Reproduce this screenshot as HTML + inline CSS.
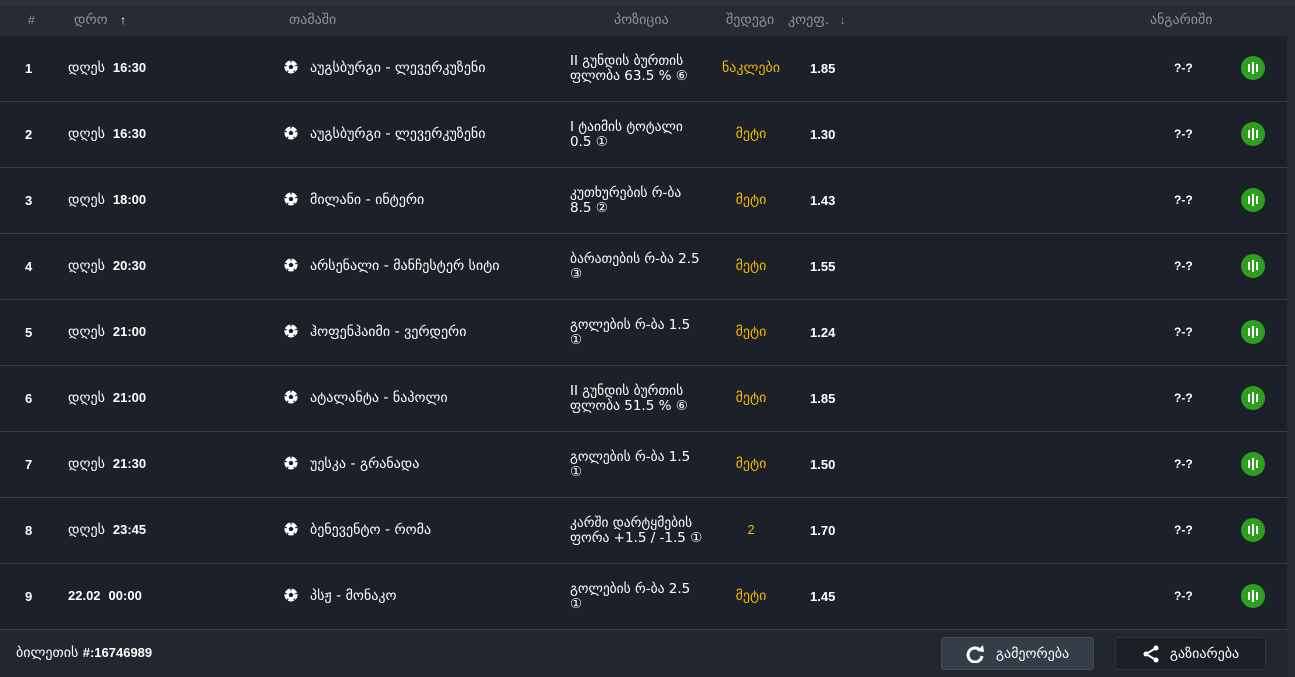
<!DOCTYPE html>
<html><head><meta charset="utf-8"><style>
*{margin:0;padding:0;box-sizing:border-box}
body{width:1295px;height:677px;background:#1c2028;font-family:"DejaVu Sans","Liberation Sans",sans-serif;color:#fff;overflow:hidden;position:relative;font-size:13px}
.top{position:absolute;left:0;top:0;width:1295px;height:6px;background:#2b3039}
.hdr{position:absolute;left:0;top:6px;width:1287px;height:30px;background:#262b34;color:#8d939c;font-size:14px}
.hdr span{position:absolute;top:6px}
.hdr b{font-family:"Liberation Sans",sans-serif;font-size:12px}
.sb{position:absolute;right:0;top:6px;width:8px;height:671px;background:#262b32}
.row{position:absolute;left:0;width:1287px;height:66px;border-bottom:1px solid #3a3f47}
.row>*{position:absolute}
.L{font-family:"Liberation Sans",sans-serif;font-weight:bold;font-size:13px}
.n{left:25px;top:25px}
.t{left:68px;top:24px;font-size:14px}
.t b{font-family:"Liberation Sans",sans-serif;font-size:13px;margin-left:8px}
.g{left:284px;top:24px;font-size:14px}
.g svg{vertical-align:-2px;margin-right:12px}
.p{left:570px;top:18px;font-size:13.5px;line-height:15px;width:170px}
.o{left:710px;width:82px;text-align:center;top:24px;color:#f5b800;font-size:14px}
.k{left:810px;top:25px}
.s{left:1174px;top:25px;font-size:12px}
.c{left:1241px;top:20px;width:24px;height:24px;border-radius:50%;background:#2e9e1f}
.c i{position:absolute;background:#fff;width:2px}
.foot{position:absolute;left:0;top:630px;width:1287px;height:47px;background:#22262e}
.btn{position:absolute;top:7px;height:33px;border-radius:3px;font-size:14px;display:flex;align-items:center;justify-content:center;gap:10px}
</style></head><body>
<div class="top"></div>
<div class="hdr">
<span style="left:28px"><b style="font-weight:normal">#</b></span>
<span style="left:74px">დრო <b style="color:#fff;margin-left:8px">↑</b></span>
<span style="left:289px">თამაში</span>
<span style="left:614px">პოზიცია</span>
<span style="left:726px">შედეგი</span>
<span style="left:788px">კოეფ. <b style="margin-left:6px">↓</b></span>
<span style="left:1150px">ანგარიში</span>
</div>
<div class="sb"></div>

<div class="row" style="top:36px"><div class="n L">1</div><div class="t">დღეს<b>16:30</b></div><div class="g"><svg width="14" height="14" viewBox="0 0 14 14"><circle cx="7" cy="7" r="6.5" fill="#fff"/><polygon points="7,4.5 9.4,6.2 8.5,9 5.5,9 4.6,6.2" fill="#1c2028"/><path d="M7 0.5v2M0.8 5.2l2 .6M13.2 5.2l-2 .6M3 12.5l1.2-1.8M11 12.5l-1.2-1.8" stroke="#1c2028" stroke-width="1.3"/></svg>აუგსბურგი - ლევერკუზენი</div><div class="p">II გუნდის ბურთის<br>ფლობა 63.5 % ⑥</div><div class="o">ნაკლები</div><div class="k L">1.85</div><div class="s L">?-?</div><div class="c"><i style="left:7px;top:8px;height:8px"></i><i style="left:11px;top:6px;height:12px"></i><i style="left:15px;top:8px;height:8px"></i></div></div>

<div class="row" style="top:102px"><div class="n L">2</div><div class="t">დღეს<b>16:30</b></div><div class="g"><svg width="14" height="14" viewBox="0 0 14 14"><circle cx="7" cy="7" r="6.5" fill="#fff"/><polygon points="7,4.5 9.4,6.2 8.5,9 5.5,9 4.6,6.2" fill="#1c2028"/><path d="M7 0.5v2M0.8 5.2l2 .6M13.2 5.2l-2 .6M3 12.5l1.2-1.8M11 12.5l-1.2-1.8" stroke="#1c2028" stroke-width="1.3"/></svg>აუგსბურგი - ლევერკუზენი</div><div class="p">I ტაიმის ტოტალი<br>0.5 ①</div><div class="o">მეტი</div><div class="k L">1.30</div><div class="s L">?-?</div><div class="c"><i style="left:7px;top:8px;height:8px"></i><i style="left:11px;top:6px;height:12px"></i><i style="left:15px;top:8px;height:8px"></i></div></div>

<div class="row" style="top:168px"><div class="n L">3</div><div class="t">დღეს<b>18:00</b></div><div class="g"><svg width="14" height="14" viewBox="0 0 14 14"><circle cx="7" cy="7" r="6.5" fill="#fff"/><polygon points="7,4.5 9.4,6.2 8.5,9 5.5,9 4.6,6.2" fill="#1c2028"/><path d="M7 0.5v2M0.8 5.2l2 .6M13.2 5.2l-2 .6M3 12.5l1.2-1.8M11 12.5l-1.2-1.8" stroke="#1c2028" stroke-width="1.3"/></svg>მილანი - ინტერი</div><div class="p">კუთხურების რ-ბა<br>8.5 ②</div><div class="o">მეტი</div><div class="k L">1.43</div><div class="s L">?-?</div><div class="c"><i style="left:7px;top:8px;height:8px"></i><i style="left:11px;top:6px;height:12px"></i><i style="left:15px;top:8px;height:8px"></i></div></div>

<div class="row" style="top:234px"><div class="n L">4</div><div class="t">დღეს<b>20:30</b></div><div class="g"><svg width="14" height="14" viewBox="0 0 14 14"><circle cx="7" cy="7" r="6.5" fill="#fff"/><polygon points="7,4.5 9.4,6.2 8.5,9 5.5,9 4.6,6.2" fill="#1c2028"/><path d="M7 0.5v2M0.8 5.2l2 .6M13.2 5.2l-2 .6M3 12.5l1.2-1.8M11 12.5l-1.2-1.8" stroke="#1c2028" stroke-width="1.3"/></svg>არსენალი - მანჩესტერ სიტი</div><div class="p">ბარათების რ-ბა 2.5<br>③</div><div class="o">მეტი</div><div class="k L">1.55</div><div class="s L">?-?</div><div class="c"><i style="left:7px;top:8px;height:8px"></i><i style="left:11px;top:6px;height:12px"></i><i style="left:15px;top:8px;height:8px"></i></div></div>

<div class="row" style="top:300px"><div class="n L">5</div><div class="t">დღეს<b>21:00</b></div><div class="g"><svg width="14" height="14" viewBox="0 0 14 14"><circle cx="7" cy="7" r="6.5" fill="#fff"/><polygon points="7,4.5 9.4,6.2 8.5,9 5.5,9 4.6,6.2" fill="#1c2028"/><path d="M7 0.5v2M0.8 5.2l2 .6M13.2 5.2l-2 .6M3 12.5l1.2-1.8M11 12.5l-1.2-1.8" stroke="#1c2028" stroke-width="1.3"/></svg>ჰოფენჰაიმი - ვერდერი</div><div class="p">გოლების რ-ბა 1.5<br>①</div><div class="o">მეტი</div><div class="k L">1.24</div><div class="s L">?-?</div><div class="c"><i style="left:7px;top:8px;height:8px"></i><i style="left:11px;top:6px;height:12px"></i><i style="left:15px;top:8px;height:8px"></i></div></div>

<div class="row" style="top:366px"><div class="n L">6</div><div class="t">დღეს<b>21:00</b></div><div class="g"><svg width="14" height="14" viewBox="0 0 14 14"><circle cx="7" cy="7" r="6.5" fill="#fff"/><polygon points="7,4.5 9.4,6.2 8.5,9 5.5,9 4.6,6.2" fill="#1c2028"/><path d="M7 0.5v2M0.8 5.2l2 .6M13.2 5.2l-2 .6M3 12.5l1.2-1.8M11 12.5l-1.2-1.8" stroke="#1c2028" stroke-width="1.3"/></svg>ატალანტა - ნაპოლი</div><div class="p">II გუნდის ბურთის<br>ფლობა 51.5 % ⑥</div><div class="o">მეტი</div><div class="k L">1.85</div><div class="s L">?-?</div><div class="c"><i style="left:7px;top:8px;height:8px"></i><i style="left:11px;top:6px;height:12px"></i><i style="left:15px;top:8px;height:8px"></i></div></div>

<div class="row" style="top:432px"><div class="n L">7</div><div class="t">დღეს<b>21:30</b></div><div class="g"><svg width="14" height="14" viewBox="0 0 14 14"><circle cx="7" cy="7" r="6.5" fill="#fff"/><polygon points="7,4.5 9.4,6.2 8.5,9 5.5,9 4.6,6.2" fill="#1c2028"/><path d="M7 0.5v2M0.8 5.2l2 .6M13.2 5.2l-2 .6M3 12.5l1.2-1.8M11 12.5l-1.2-1.8" stroke="#1c2028" stroke-width="1.3"/></svg>უესკა - გრანადა</div><div class="p">გოლების რ-ბა 1.5<br>①</div><div class="o">მეტი</div><div class="k L">1.50</div><div class="s L">?-?</div><div class="c"><i style="left:7px;top:8px;height:8px"></i><i style="left:11px;top:6px;height:12px"></i><i style="left:15px;top:8px;height:8px"></i></div></div>

<div class="row" style="top:498px"><div class="n L">8</div><div class="t">დღეს<b>23:45</b></div><div class="g"><svg width="14" height="14" viewBox="0 0 14 14"><circle cx="7" cy="7" r="6.5" fill="#fff"/><polygon points="7,4.5 9.4,6.2 8.5,9 5.5,9 4.6,6.2" fill="#1c2028"/><path d="M7 0.5v2M0.8 5.2l2 .6M13.2 5.2l-2 .6M3 12.5l1.2-1.8M11 12.5l-1.2-1.8" stroke="#1c2028" stroke-width="1.3"/></svg>ბენევენტო - რომა</div><div class="p">კარში დარტყმების<br>ფორა +1.5 / -1.5 ①</div><div class="o" style="font-family:'Liberation Sans',sans-serif;font-size:13px">2</div><div class="k L">1.70</div><div class="s L">?-?</div><div class="c"><i style="left:7px;top:8px;height:8px"></i><i style="left:11px;top:6px;height:12px"></i><i style="left:15px;top:8px;height:8px"></i></div></div>

<div class="row" style="top:564px"><div class="n L">9</div><div class="t"><b style="margin-left:0">22.02</b><b>00:00</b></div><div class="g"><svg width="14" height="14" viewBox="0 0 14 14"><circle cx="7" cy="7" r="6.5" fill="#fff"/><polygon points="7,4.5 9.4,6.2 8.5,9 5.5,9 4.6,6.2" fill="#1c2028"/><path d="M7 0.5v2M0.8 5.2l2 .6M13.2 5.2l-2 .6M3 12.5l1.2-1.8M11 12.5l-1.2-1.8" stroke="#1c2028" stroke-width="1.3"/></svg>პსჟ - მონაკო</div><div class="p">გოლების რ-ბა 2.5<br>①</div><div class="o">მეტი</div><div class="k L">1.45</div><div class="s L">?-?</div><div class="c"><i style="left:7px;top:8px;height:8px"></i><i style="left:11px;top:6px;height:12px"></i><i style="left:15px;top:8px;height:8px"></i></div></div>

<div class="foot">
<div style="position:absolute;left:16px;top:15px;font-size:14px">ბილეთის <span style="font-family:'Liberation Sans',sans-serif;font-size:13px;font-weight:bold">#:16746989</span></div>
<div class="btn" style="left:941px;width:153px;background:#353d48;border:1px solid #434b56"><svg width="20" height="18" viewBox="0 0 20 18"><path d="M14 5A7 7 0 1 0 16 11" fill="none" stroke="#fff" stroke-width="3"/><polygon points="11,6 18,7 17,0" fill="#fff"/></svg>გამეორება</div>
<div class="btn" style="left:1115px;width:151px;background:#1b1f26;border:1px solid #30353d"><svg width="18" height="18" viewBox="0 0 18 18"><path d="M14 3L4 9l10 6" fill="none" stroke="#fff" stroke-width="2"/><circle cx="14" cy="3" r="2.5" fill="#fff"/><circle cx="4" cy="9" r="2.5" fill="#fff"/><circle cx="14" cy="15" r="2.5" fill="#fff"/></svg>გაზიარება</div>
</div>
</body></html>
